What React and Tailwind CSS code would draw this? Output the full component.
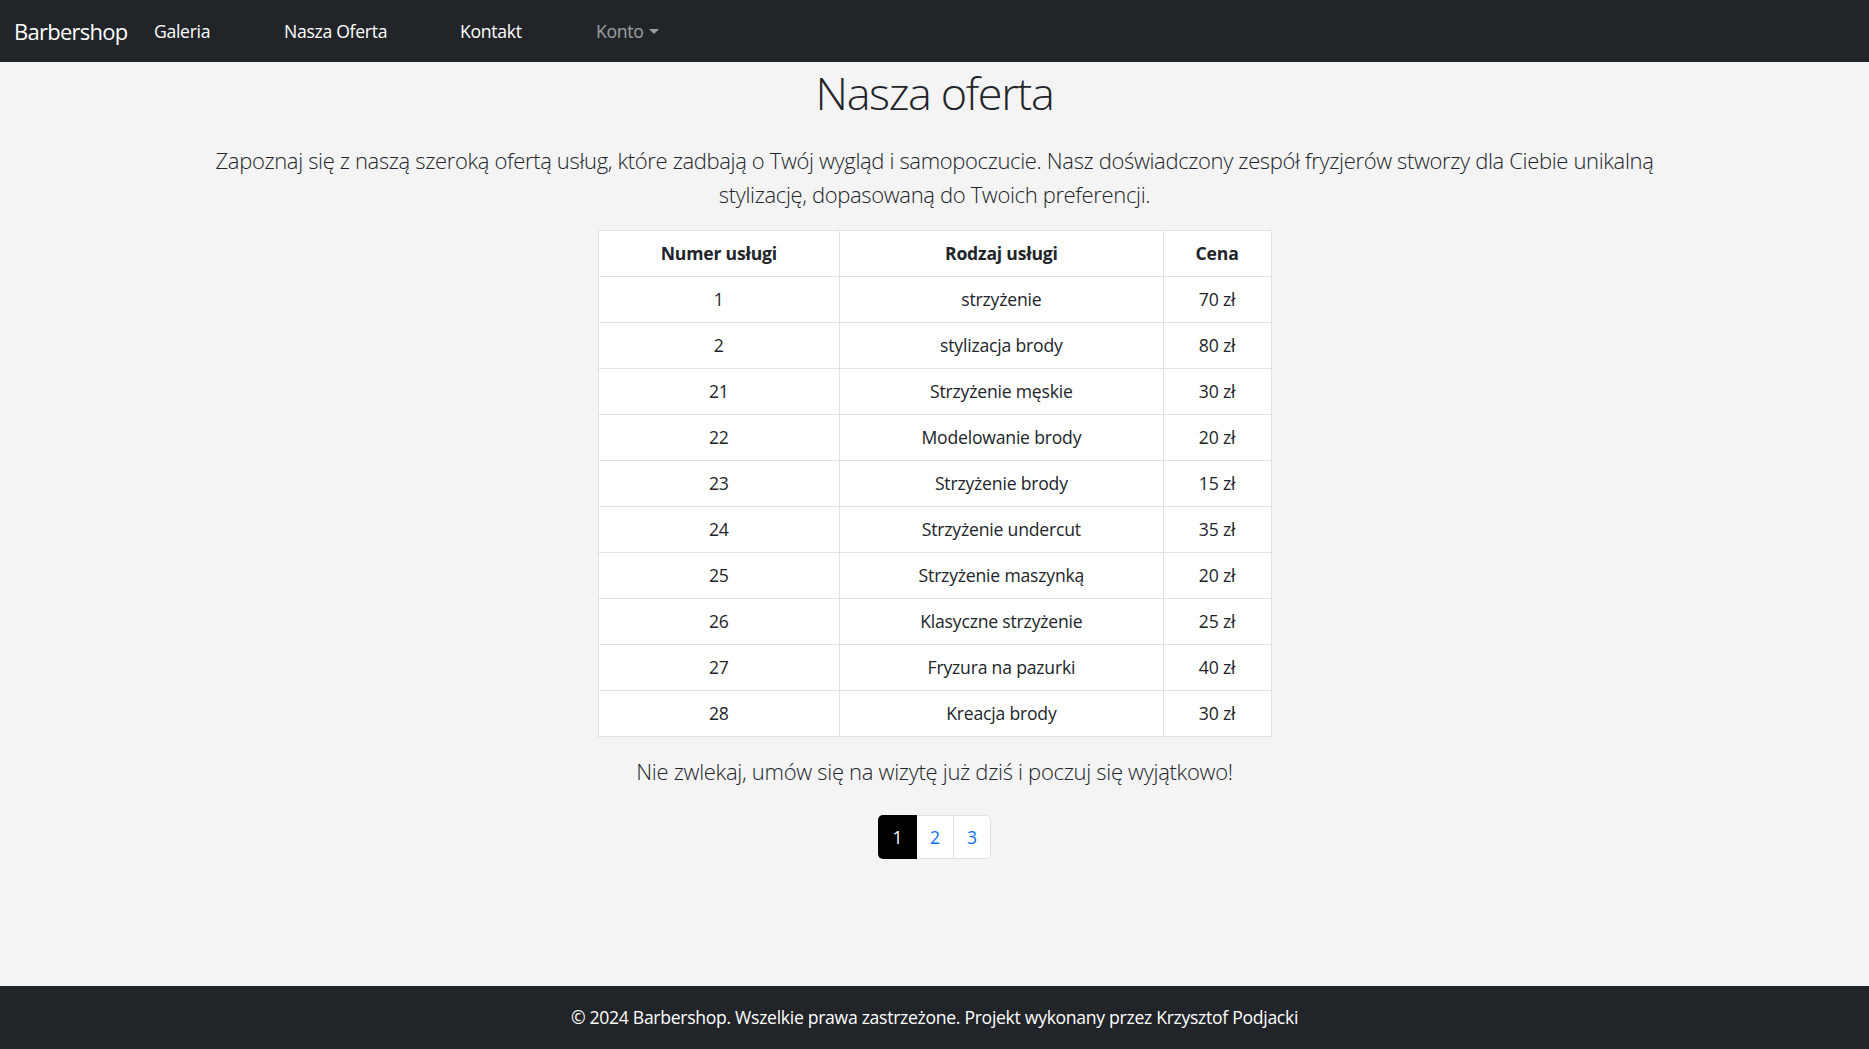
import React from "react";

const rows = [
  ["1", "strzyżenie", "70 zł"],
  ["2", "stylizacja brody", "80 zł"],
  ["21", "Strzyżenie męskie", "30 zł"],
  ["22", "Modelowanie brody", "20 zł"],
  ["23", "Strzyżenie brody", "15 zł"],
  ["24", "Strzyżenie undercut", "35 zł"],
  ["25", "Strzyżenie maszynką", "20 zł"],
  ["26", "Klasyczne strzyżenie", "25 zł"],
  ["27", "Fryzura na pazurki", "40 zł"],
  ["28", "Kreacja brody", "30 zł"],
];

export default function App() {
  return (
    <div
      className="min-h-screen flex flex-col bg-[#f4f4f4] text-[#212529]"
      style={{ fontFamily: '"Segoe UI", "Open Sans", "Noto Sans", sans-serif' }}
    >
      <nav className="h-[62px] shrink-0 bg-[#212529] flex items-center pl-[14px]">
        <div className="w-[140px] text-[22px] text-white tracking-[-0.75px]">Barbershop</div>
        <div className="w-[130px] text-[17.6px] text-white tracking-[-0.3px]">Galeria</div>
        <div className="w-[176px] text-[17.6px] text-white tracking-[-0.3px]">Nasza Oferta</div>
        <div className="w-[136px] text-[17.6px] text-white tracking-[-0.3px]">Kontakt</div>
        <div className="flex items-center text-[17.6px] text-white/55 tracking-[-0.3px]">
          Konto
          <span className="ml-[5px] mt-[2px] w-0 h-0 border-l-[5px] border-r-[5px] border-t-[5px] border-l-transparent border-r-transparent border-t-white/55"></span>
        </div>
      </nav>

      <main className="flex-1 flex flex-col items-center">
        <h1 className="mt-[3px] text-[45px] leading-[55px] font-light tracking-[-1.4px]">Nasza oferta</h1>
        <p className="mt-[23px] text-center text-[22px] leading-[34px] font-light text-[#212529] tracking-[-0.35px]">
          Zapoznaj się z naszą szeroką ofertą usług, które zadbają o Twój wygląd i samopoczucie. Nasz doświadczony zespół fryzjerów stworzy dla Ciebie unikalną
          <br />
          stylizację, dopasowaną do Twoich preferencji.
        </p>
        <table className="mt-[19px] w-[674px] bg-white border-collapse text-[17.6px] tracking-[-0.2px]">
          <thead>
            <tr className="h-[46px]">
              <th className="w-[242px] border border-[#dee2e6] font-bold">Numer usługi</th>
              <th className="w-[324px] border border-[#dee2e6] font-bold">Rodzaj usługi</th>
              <th className="w-[108px] border border-[#dee2e6] font-bold">Cena</th>
            </tr>
          </thead>
          <tbody>
            {rows.map((r) => (
              <tr key={r[0]} className="h-[46px]">
                <td className="border border-[#dee2e6] text-center">{r[0]}</td>
                <td className="border border-[#dee2e6] text-center">{r[1]}</td>
                <td className="border border-[#dee2e6] text-center">{r[2]}</td>
              </tr>
            ))}
          </tbody>
        </table>
        <p className="mt-[17px] text-[22px] leading-[34px] font-light tracking-[-0.3px]">
          Nie zwlekaj, umów się na wizytę już dziś i poczuj się wyjątkowo!
        </p>
        <div className="mt-[27px] flex text-[17.6px]">
          <span className="w-[39px] h-[44px] flex items-center justify-center bg-black text-white rounded-l-[5px]">1</span>
          <span className="w-[37px] h-[44px] flex items-center justify-center bg-white text-[#0d6efd] border-y border-r border-[#dee2e6]">2</span>
          <span className="w-[37px] h-[44px] flex items-center justify-center bg-white text-[#0d6efd] border-y border-r border-[#dee2e6] rounded-r-[5px]">3</span>
        </div>
      </main>

      <footer className="h-[63px] shrink-0 bg-[#212529] flex items-center justify-center text-white text-[17.6px] tracking-[-0.3px]">
        © 2024 Barbershop. Wszelkie prawa zastrzeżone. Projekt wykonany przez Krzysztof Podjacki
      </footer>
    </div>
  );
}
